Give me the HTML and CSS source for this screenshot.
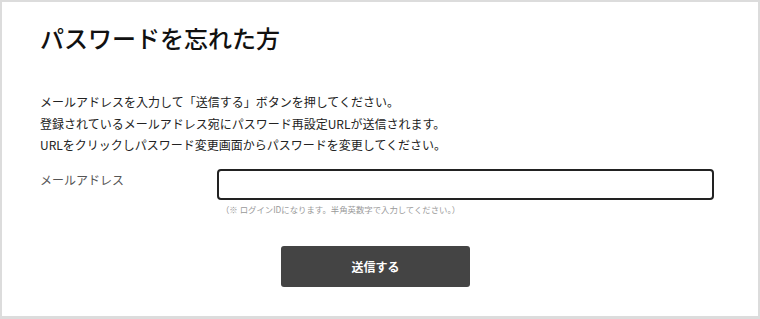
FILE: index.html
```html
<!DOCTYPE html>
<html lang="ja">
<head>
<meta charset="utf-8">
<link rel="stylesheet" href="styles.css">
</head>
<body>
<div class="frame">
  <h1 class="title">パスワードを忘れた方</h1>
  <div class="lead">
    <p>メールアドレスを入力して「送信する」ボタンを押してください。</p>
    <p>登録されているメールアドレス宛にパスワード再設定URLが送信されます。</p>
    <p>URLをクリックしパスワード変更画面からパスワードを変更してください。</p>
  </div>
  <div class="row">
    <label class="label" for="mail">メールアドレス</label>
    <div class="field">
      <input id="mail" class="input" type="text">
      <p class="hint">（※ ログインIDになります。半角英数字で入力してください。）</p>
    </div>
  </div>
  <div class="actions">
    <button class="btn" type="button">送信する</button>
  </div>
</div>
</body>
</html>
```
FILE: styles.css
```css
* { box-sizing: border-box; }
html, body { margin: 0; padding: 0; background: #fff; }
body { font-family: "Noto Sans CJK JP", "Noto Sans", sans-serif; color: #222; }
.frame {
  width: 760px;
  height: 319px;
  border: 2px solid #dcdcdc;
  border-bottom-width: 3px;
  padding: 20px 44px 0 38px;
}
.title {
  margin: 0;
  font-size: 24px;
  line-height: 32px;
  font-weight: 500;
  color: #111;
}
.lead {
  margin-top: 37px;
  font-size: 12px;
  line-height: 21.5px;
  color: #222;
}
.lead p { margin: 0; }
.row {
  display: flex;
  margin-top: 13px;
}
.label {
  width: 180px;
  font-size: 12px;
  line-height: 18px;
  color: #555;
  padding-top: 2px;
}
.field { flex: 1; }
.input {
  display: block;
  width: 497px;
  height: 31px;
  border: 2px solid #222;
  border-radius: 4px;
  margin: 0;
  outline: none;
}
.hint {
  margin: 3px 0 0 4px;
  font-size: 8.4px;
  line-height: 12px;
  color: #999;
}
.actions {
  display: flex;
  margin-top: 31px;
  padding-left: 241px;
}
.btn {
  width: 189px;
  height: 41px;
  background: #444;
  color: #fff;
  border: none;
  border-radius: 3px;
  font-family: inherit;
  font-size: 12px;
  font-weight: 700;
}
```
